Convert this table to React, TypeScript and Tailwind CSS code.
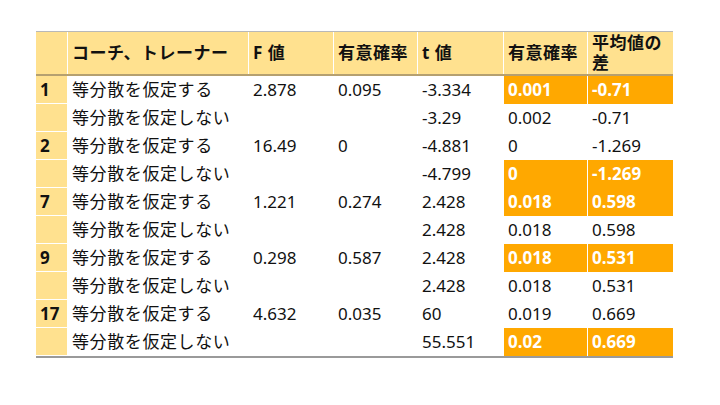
const rows = [
  { id: "1", label: "等分散を仮定する", f: "2.878", p: "0.095", t: "-3.334", sig: "0.001", diff: "-0.71", hot: true },
  { id: "", label: "等分散を仮定しない", f: "", p: "", t: "-3.29", sig: "0.002", diff: "-0.71", hot: false },
  { id: "2", label: "等分散を仮定する", f: "16.49", p: "0", t: "-4.881", sig: "0", diff: "-1.269", hot: false },
  { id: "", label: "等分散を仮定しない", f: "", p: "", t: "-4.799", sig: "0", diff: "-1.269", hot: true },
  { id: "7", label: "等分散を仮定する", f: "1.221", p: "0.274", t: "2.428", sig: "0.018", diff: "0.598", hot: true },
  { id: "", label: "等分散を仮定しない", f: "", p: "", t: "2.428", sig: "0.018", diff: "0.598", hot: false },
  { id: "9", label: "等分散を仮定する", f: "0.298", p: "0.587", t: "2.428", sig: "0.018", diff: "0.531", hot: true },
  { id: "", label: "等分散を仮定しない", f: "", p: "", t: "2.428", sig: "0.018", diff: "0.531", hot: false },
  { id: "17", label: "等分散を仮定する", f: "4.632", p: "0.035", t: "60", sig: "0.019", diff: "0.669", hot: false },
  { id: "", label: "等分散を仮定しない", f: "", p: "", t: "55.551", sig: "0.02", diff: "0.669", hot: true },
];

const cols = "grid grid-cols-[32px_181px_85px_84px_86px_84px_85px]";
const headers = ["", "コーチ、トレーナー", "F 値", "有意確率", "t 値", "有意確率", "平均値の差"];

export default function App() {
  return (
    <div className="flex h-[405px] w-[720px] items-start bg-white pl-[36px] pt-[31px] font-['Noto_Sans','Noto_Sans_CJK_JP',sans-serif] text-[17px] text-[#111]">
      <div className="flex flex-col border-t border-b-2 border-t-[#b8b8b8] border-b-[#9a9a9a]">
        <div className={`${cols} h-[44px] border-b-2 border-[#b5a070] bg-[#ffe18f] font-bold`}>
          {headers.map((h, i) => (
            <div
              key={i}
              className={`flex items-center border-r border-white px-[4px] leading-[20px] tracking-[0.5px] ${i === 6 ? "border-r-0 pr-[6px]" : ""}`}
            >
              {h}
            </div>
          ))}
        </div>
        {rows.map((r, i) => (
          <div key={i} className={`${cols} h-[28px]`}>
            <div className="flex items-center border-b border-r border-white bg-[#ffe18f] pl-[4px] font-bold">
              {r.id}
            </div>
            <div className="flex items-center px-[4px] tracking-[0.6px]">{r.label}</div>
            <div className="flex items-center px-[4px]">{r.f}</div>
            <div className="flex items-center px-[4px]">{r.p}</div>
            <div className="flex items-center px-[4px]">{r.t}</div>
            {r.hot ? (
              <>
                <div className="flex items-center border-r border-white bg-[#ffa800] px-[4px] font-bold text-white">{r.sig}</div>
                <div className="flex items-center bg-[#ffa800] px-[4px] font-bold text-white">{r.diff}</div>
              </>
            ) : (
              <>
                <div className="flex items-center px-[4px]">{r.sig}</div>
                <div className="flex items-center px-[4px]">{r.diff}</div>
              </>
            )}
          </div>
        ))}
      </div>
    </div>
  );
}
